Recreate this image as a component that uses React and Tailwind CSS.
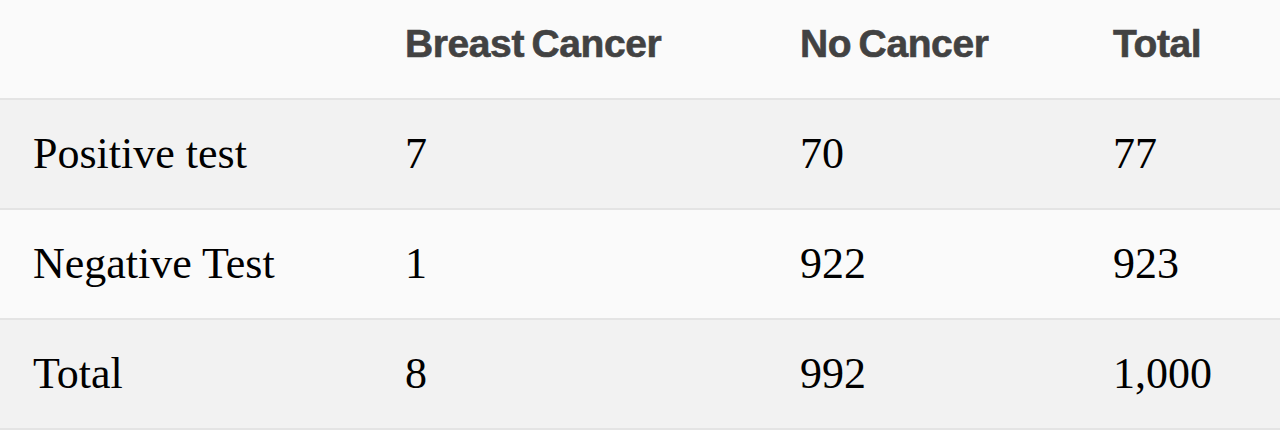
const ROWS = [
  { label: "Positive test", cells: ["7", "70", "77"], bg: "bg-[#f2f2f2]" },
  { label: "Negative Test", cells: ["1", "922", "923"], bg: "bg-[#fafafa]" },
  { label: "Total", cells: ["8", "992", "1,000"], bg: "bg-[#f2f2f2]" },
];

const COLS = "grid grid-cols-[372px_395px_313px_1fr] pl-[33px] items-center";

export default function App() {
  return (
    <div className="w-[1280px] h-[430px] overflow-hidden bg-[#fafafa]">
      {/* header */}
      <div className={`${COLS} h-[100px] border-b-2 border-[#e4e4e4] bg-[#fafafa] pb-[9px]`}>
        <div />
        {["Breast Cancer", "No Cancer", "Total"].map((h) => (
          <div
            key={h}
            className="font-['Liberation_Sans',Arial,sans-serif] font-bold text-[39px] tracking-[-0.4px] [word-spacing:-3px] text-[#424242] [-webkit-text-stroke:0.6px_#424242]"
          >
            {h}
          </div>
        ))}
      </div>

      {ROWS.map((r) => (
        <div key={r.label} className={`${COLS} h-[110px] border-b-2 border-[#e4e4e4] ${r.bg}`}>
          <div className="font-['Liberation_Serif','Times_New_Roman',serif] text-[44px] text-black">{r.label}</div>
          {r.cells.map((c, i) => (
            <div key={i} className="font-['Liberation_Serif','Times_New_Roman',serif] text-[44px] text-black">
              {c}
            </div>
          ))}
        </div>
      ))}
    </div>
  );
}
